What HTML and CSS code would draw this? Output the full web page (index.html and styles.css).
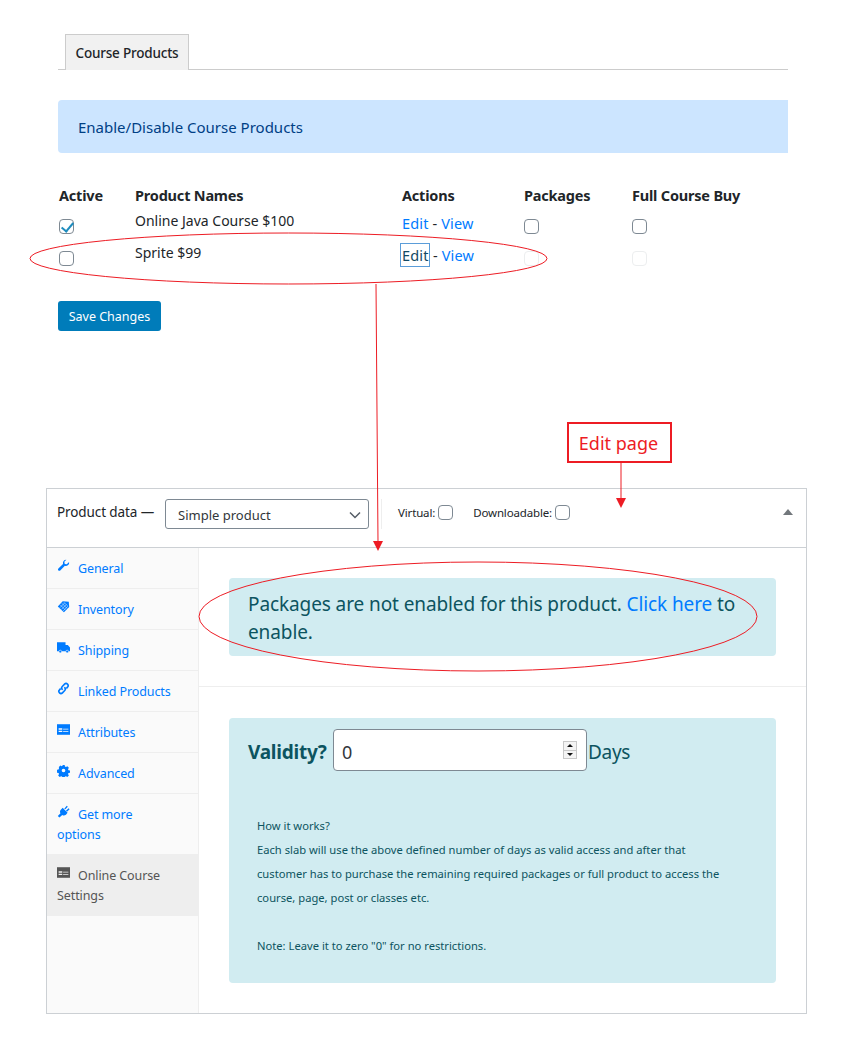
FILE: index.html
```html
<!DOCTYPE html>
<html>
<head>
    <title>Course Products</title>
    <link rel="stylesheet" href="styles.css">
</head>
<body>
    <div class="page">
        <!-- Course products settings -->
        <section class="courses">
            <div class="tabs"><span class="tab">Course Products</span></div>
            <div class="banner">Enable/Disable Course Products</div>
            <table class="products">
                <thead>
                    <tr>
                        <th class="col-active">Active</th>
                        <th class="col-name">Product Names</th>
                        <th class="col-actions">Actions</th>
                        <th class="col-packages">Packages</th>
                        <th>Full Course Buy</th>
                    </tr>
                </thead>
                <tbody>
                    <tr>
                        <td class="first"><input type="checkbox" checked></td>
                        <td class="name">Online Java Course $100</td>
                        <td class="actions"><a href="#">Edit</a> - <a href="#">View</a></td>
                        <td><input type="checkbox"></td>
                        <td><input type="checkbox"></td>
                    </tr>
                    <tr>
                        <td class="first"><input type="checkbox"></td>
                        <td class="name">Sprite $99</td>
                        <td class="actions"><a href="#" class="focused">Edit</a> - <a href="#">View</a></td>
                        <td><input type="checkbox" disabled></td>
                        <td><input type="checkbox" disabled></td>
                    </tr>
                </tbody>
            </table>
            <button class="save">Save Changes</button>
        </section>

        <!-- Product data box -->
        <section class="product-box">
            <header class="box-head">
                <span class="box-title">Product data —</span>
                <span class="select">
                    <span>Simple product</span>
                    <svg width="12" height="8" viewBox="0 0 12 8"><path d="M1 1.500l5 5 5-5" fill="none" stroke="#555d66" stroke-width="1.500"/></svg>
                </span>
                <span class="head-rule"></span>
                <label class="head-check head-virtual">Virtual: <input type="checkbox"></label>
                <label class="head-check">Downloadable: <input type="checkbox"></label>
                <span class="collapse"></span>
            </header>
            <div class="box-body">
                <ul class="side">
                    <li><a href="#"><svg class="ico" viewBox="0 0 16 16"><path d="M15 4.500a4 4 0 0 1-5.300 3.800L4 14a1.600 1.600 0 0 1-2.300-2.300l5.700-5.700A4 4 0 0 1 11.500 1L9 3.500l.5 2.500 2.500.5 2.500-2.500z"/></svg>General</a></li>
                    <li><a href="#"><svg class="ico" viewBox="0 0 16 16"><path d="M7 1.500l7.500.5.5 6.500L8.500 15 1 8z"/><path d="M4 6l6.500 6.500M6 4l6.500 6.500M8.500 2.800l4.500 4.500M3.500 9.500L9.500 3.500M5.500 11.500l6-6M7.500 13.500l6-6" stroke="#fafafa" stroke-width=".6" fill="none"/></svg>Inventory</a></li>
                    <li><a href="#"><svg class="ico" viewBox="0 0 16 16"><path d="M0 1.500h10.500V5h2.800L16 8v4.500H0z"/><circle cx="4" cy="13" r="1.700" stroke="#fafafa" stroke-width=".7"/><circle cx="12.500" cy="13" r="1.700" stroke="#fafafa" stroke-width=".7"/></svg>Shipping</a></li>
                    <li><a href="#"><svg class="ico" viewBox="0 0 16 16"><g fill="none" stroke-width="2" class="ico-line"><path d="M7 9.500l-.5-.5a2.500 2.500 0 0 1 0-3.500l2.800-2.800a2.500 2.500 0 0 1 3.600 3.600L11.500 8"/><path d="M9 6.500l.5.500a2.500 2.500 0 0 1 0 3.500l-2.800 2.800a2.500 2.500 0 0 1-3.600-3.600L4.500 8"/></g></svg>Linked Products</a></li>
                    <li><a href="#"><svg class="ico" viewBox="0 0 16 16"><path d="M0 1.500h16v13H0z"/><path d="M2 6.500h4.500v1.700H2zM2 9.500h4.500v1.700H2zM7.500 7h6.500v1H7.500zM7.500 10h6.500v1H7.500z" fill="#fafafa"/></svg>Attributes</a></li>
                    <li><a href="#"><svg class="ico" viewBox="0 0 16 16"><path fill-rule="evenodd" d="M6.500 1h3l.4 2 1.300.6 1.800-1 2 2.100-1.100 1.700.6 1.400 2 .4v2.900l-2 .4-.6 1.300 1.100 1.800-2 2-1.800-1-1.300.5-.4 2h-3l-.4-2-1.300-.5-1.800 1-2-2 1.100-1.800-.6-1.300-2-.4V7.200l2-.4.6-1.400L1.900 3.700l2-2.100 1.800 1 1.300-.6zM8 5.800a2.400 2.400 0 1 0 0 4.800 2.400 2.400 0 0 0 0-4.800z" transform="translate(.5 .3) scale(.94)"/></svg>Advanced</a></li>
                    <li><a href="#"><svg class="ico" viewBox="0 0 16 16"><path d="M7 3.500l6 6-2 2.500c-1.500 1.200-3.200 1.200-4.500.3L3 15.500 1 13.500l3.300-3.500c-.9-1.300-.8-3 .4-4.300z"/><path d="M9 4.500l3-3.500 1.300 1.300-3 3zM11 7l3.200-3 1.300 1.300-3.200 3z"/></svg>Get more options</a></li>
                    <li class="current"><a href="#"><svg class="ico" viewBox="0 0 16 16"><path d="M0 1.500h16v13H0z"/><path d="M2 6.500h4.500v1.700H2zM2 9.500h4.500v1.700H2zM7.500 7h6.500v1H7.500zM7.500 10h6.500v1H7.500z" fill="#eee"/></svg>Online Course Settings</a></li>
                </ul>
                <div class="panel">
                    <div class="panel-top">
                        <div class="alert alert-line">Packages are not enabled for this product. <a href="#">Click here</a> to enable.</div>
                    </div>
                    <div class="panel-bottom">
                        <div class="alert validity">
                            <div class="validity-row">
                                <strong>Validity?</strong>
                                <span class="number">
                                    <input type="number" value="0">
                                    <span class="spinner"><i class="up"></i><i class="down"></i></span>
                                </span>
                                <span class="unit">Days</span>
                            </div>
                            <p class="help">How it works?<br>
                            Each slab will use the above defined number of days as valid access and after that customer has to purchase the remaining required packages or full product to access the course, page, post or classes etc.<br>
                            <br>
                            Note: Leave it to zero "0" for no restrictions.</p>
                        </div>
                    </div>
                </div>
            </div>
        </section>

        <!-- Red annotations drawn on top of the screenshot -->
        <svg class="marks" width="855" height="1062" viewBox="0 0 855 1062">
            <g fill="none" stroke="#ed1c24" stroke-width="1">
                <ellipse cx="288.500" cy="258.500" rx="258.500" ry="25.500"/>
                <ellipse cx="478" cy="616.500" rx="279" ry="54.500"/>
                <path d="M376 284L378 543"/>
                <path d="M621 463V499"/>
            </g>
            <g fill="#ed1c24">
                <path d="M373 541h10l-5 10z"/>
                <path d="M616 498h10l-5 10z"/>
            </g>
        </svg>
        <div class="callout">Edit page</div>
    </div>
</body>
</html>
```

FILE: styles.css
```css
* {
    box-sizing: border-box;
}
body {
    margin: 0;
    font-family: "Noto Sans", sans-serif;
    color: #212529;
    background: #fff;
}
a {
    color: #007bff;
    text-decoration: none;
}
.page {
    position: relative;
    width: 855px;
    height: 1062px;
    overflow: hidden;
}
input[type=checkbox] {
    appearance: none;
    display: block;
    position: relative;
    width: 15px;
    height: 15px;
    margin: 0;
    background: #fff;
    border: 1px solid #7e8993;
    border-radius: 4px;
}
input[type=checkbox]:checked::before {
    content: "";
    position: absolute;
    left: 4px;
    top: 0;
    width: 5px;
    height: 10px;
    border: solid #1e8cbe;
    border-width: 0 2.500px 2.500px 0;
    transform: rotate(40deg);
}
input[type=checkbox]:disabled {
    border-color: #eceeef;
}

/* top section */
.courses {
    width: 730px;
    margin-left: 58px;
    padding-top: 34px;
}
.tabs {
    height: 36px;
    padding-left: 7px;
    border-bottom: 1px solid #ccc;
}
.tab {
    display: block;
    width: 124px;
    height: 36px;
    border: 1px solid #ccc;
    border-bottom: none;
    background: #f1f1f1;
    font-size: 13.500px;
    font-weight: 500;
    line-height: 37px;
    text-align: center;
    letter-spacing: -0.2px;
}
.banner {
    height: 53px;
    margin-top: 30px;
    padding-left: 20px;
    border-radius: 4px 0 0 4px;
    background: #cce5ff;
    color: #004085;
    font-size: 15px;
    line-height: 55px;
}
.products {
    margin-top: 32px;
    border-collapse: collapse;
    font-size: 14px;
}
.products th {
    padding: 0 0 0 1px;
    height: 24px;
    font-size: 14.500px;
    font-weight: 700;
    text-align: left;
    vertical-align: top;
    letter-spacing: -0.2px;
}
.products td {
    height: 32px;
    padding: 3px 0 0 1px;
    vertical-align: top;
}
.col-active {
    width: 76px;
}
.col-name {
    width: 267px;
}
.col-actions {
    width: 122px;
}
.col-packages {
    width: 108px;
}
.products td input {
    margin-top: 7px;
}
.products .first {
    padding-left: 1px;
}
.products .name {
    padding-top: 0;
    padding-left: 1px;
    line-height: 24px;
}
.products .actions {
    padding-top: 2px;
    font-size: 14.500px;
    line-height: 24px;
    letter-spacing: 0.15px;
    white-space: nowrap;
}
.focused {
    display: inline-block;
    width: 28px;
    height: 22px;
    margin-left: -1px;
    padding-left: 1px;
    line-height: 22px;
    color: #124964;
    box-shadow: 0 0 0 1px #5b9dd9;
}
.save {
    display: block;
    width: 103px;
    height: 30px;
    margin-top: 28px;
    padding: 1px 0 0;
    border: none;
    border-radius: 3px;
    background: #007cba;
    color: #fff;
    font-family: inherit;
    font-size: 12.500px;
}

/* product data box */
.product-box {
    width: 761px;
    height: 526px;
    margin: 157px 0 0 46px;
    border: 1px solid #ccd0d4;
    display: flex;
    flex-direction: column;
    font-size: 13px;
}
.box-head {
    display: flex;
    align-items: center;
    height: 59px;
    flex: none;
    padding: 0 13px 8px 10px;
    border-bottom: 1px solid #ccd0d4;
}
.box-title {
    width: 108px;
    margin-top: -4px;
    font-size: 13.500px;
    letter-spacing: -0.1px;
}
.select {
    display: flex;
    align-items: center;
    justify-content: space-between;
    width: 204px;
    height: 30px;
    padding: 1px 7px 0 12px;
    border: 1px solid #7e8993;
    border-radius: 3px;
    color: #32373c;
    font-size: 13px;
}
.head-rule {
    width: 1px;
    height: 30px;
    margin: 0 16px 0 12px;
    background: #eee;
}
.head-check {
    display: flex;
    align-items: center;
    gap: 3px;
    margin-top: -4px;
    font-size: 11.500px;
    letter-spacing: -0.15px;
}
.head-virtual {
    margin-right: 20px;
}
.collapse {
    width: 0;
    height: 0;
    margin-left: auto;
    margin-top: -4px;
    border: 5px solid transparent;
    border-top: none;
    border-bottom: 6px solid #72777c;
}
.box-body {
    display: flex;
    flex: 1;
}
.side {
    width: 152px;
    flex: none;
    margin: 0;
    padding: 0;
    list-style: none;
    background: #fafafa;
    border-right: 1px solid #eee;
}
.side li {
    border-bottom: 1px solid #eee;
}
.side a {
    display: block;
    padding: 11px 20px 9px 10px;
    line-height: 20px;
    font-size: 12.500px;
    letter-spacing: -0.1px;
}
.ico {
    display: inline-block;
    width: 13px;
    height: 13px;
    margin: 0 8px 0 0;
    vertical-align: 1px;
    fill: #007bff;
}
.ico-line {
    stroke: #007bff;
}
.side .current {
    border-bottom: none;
    background: #eee;
}
.side .current a {
    color: #555;
    padding-bottom: 10px;
}
.side .current .ico {
    fill: #555;
}
.panel {
    flex: 1;
}
.panel-top {
    padding: 30px;
    border-bottom: 1px solid #eee;
}
.panel-bottom {
    padding: 31px 30px 30px;
}
.alert {
    border-radius: 4px;
    background: #d1ecf1;
    color: #0c5460;
}
.alert-line {
    padding: 12px 19px 10px;
    font-size: 19px;
    line-height: 28px;
    letter-spacing: -0.1px;
}
.validity {
    height: 265px;
    padding: 11px 19px;
}
.validity-row {
    display: flex;
    align-items: center;
    height: 42px;
    font-size: 19px;
}
.validity-row strong {
    width: 85px;
    padding-top: 4px;
    letter-spacing: -0.25px;
}
.number {
    position: relative;
    display: block;
    width: 254px;
    height: 42px;
}
.number input {
    display: block;
    width: 100%;
    height: 42px;
    padding: 4px 8px 0;
    border: 1px solid #7e8993;
    border-radius: 4px;
    background: #fff;
    color: #32373c;
    font-family: inherit;
    font-size: 18px;
    appearance: textfield;
}
.number input::-webkit-inner-spin-button {
    display: none;
}
.spinner {
    position: absolute;
    left: 230px;
    top: 12px;
    display: flex;
    flex-direction: column;
    gap: 1px;
    width: 14px;
    height: 18px;
    padding: 1px;
    background: #c8c8c8;
}
.spinner i {
    display: flex;
    align-items: center;
    justify-content: center;
    flex: 1;
    background: #f4f4f4;
}
.spinner i::before {
    content: "";
    border: 3px solid transparent;
}
.up::before {
    border-top: none !important;
    border-bottom-color: #111 !important;
}
.down::before {
    border-bottom: none !important;
    border-top-color: #111 !important;
}
.unit {
    margin-left: 1px;
    padding-top: 4px;
    letter-spacing: -0.3px;
}
.help {
    width: 465px;
    margin: 43px 0 0 9px;
    font-size: 11.200px;
    line-height: 24px;
}

/* annotations */
.marks {
    position: absolute;
    left: 0;
    top: 0;
    pointer-events: none;
}
.callout {
    position: absolute;
    left: 567px;
    top: 422px;
    width: 105px;
    height: 41px;
    padding-right: 2px;
    border: 2px solid #ed1c24;
    background: #fff;
    color: #ed1c24;
    font-size: 18px;
    line-height: 38px;
    text-align: center;
}
```
